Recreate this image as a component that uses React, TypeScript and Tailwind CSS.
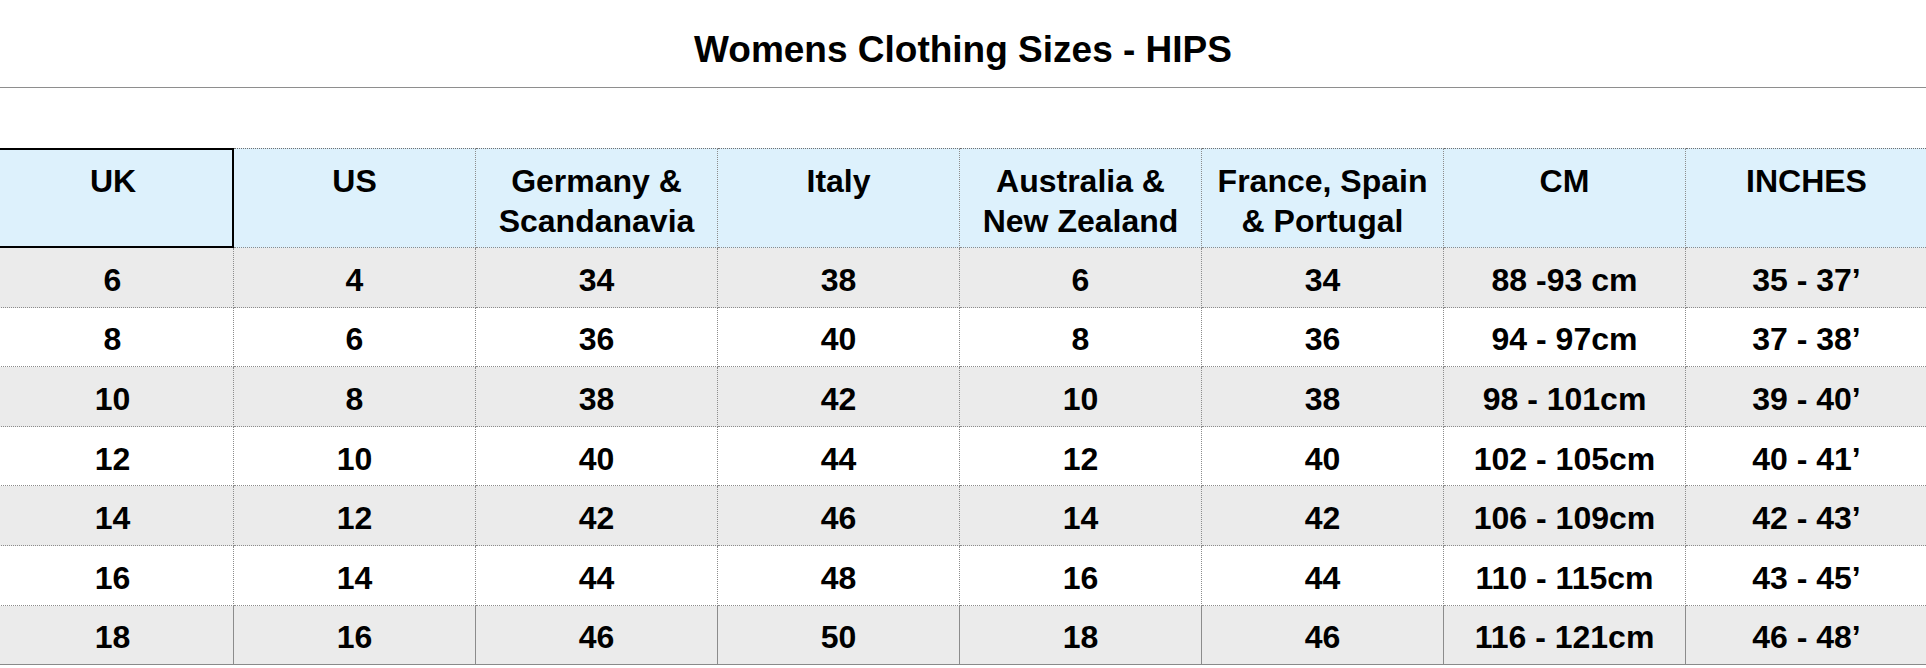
const headers: React.ReactNode[] = [
  "UK",
  "US",
  <>Germany &amp;<br />Scandanavia</>,
  "Italy",
  <>Australia &amp;<br />New Zealand</>,
  <>France, Spain<br />&amp; Portugal</>,
  "CM",
  "INCHES",
];

const rows: string[][] = [
  ["6", "4", "34", "38", "6", "34", "88 -93 cm", "35 - 37’"],
  ["8", "6", "36", "40", "8", "36", "94 - 97cm", "37 - 38’"],
  ["10", "8", "38", "42", "10", "38", "98 - 101cm", "39 - 40’"],
  ["12", "10", "40", "44", "12", "40", "102 - 105cm", "40 - 41’"],
  ["14", "12", "42", "46", "14", "42", "106 - 109cm", "42 - 43’"],
  ["16", "14", "44", "48", "16", "44", "110 - 115cm", "43 - 45’"],
  ["18", "16", "46", "50", "18", "46", "116 - 121cm", "46 - 48’"],
];

export default function App() {
  return (
    <div className="w-[1926px] h-[668px] overflow-hidden bg-white text-black font-['Liberation_Sans',Arial,sans-serif] font-bold">
      <div className="h-[88px] flex items-center justify-center border-b border-[#8e8e8e] text-[37px] pt-[12px]">
        Womens Clothing Sizes - HIPS
      </div>
      <div className="h-[60px]" />
      <div className="ml-[-8px] w-[1936px]">
        <div className="grid grid-cols-[repeat(8,242px)] h-[100px] bg-[#ddf1fc] text-[32px] leading-[40px]">
          {headers.map((h, i) =>
            i === 0 ? (
              <div key={i} className="border-2 border-black text-center pt-[11px]">
                {h}
              </div>
            ) : (
              <div
                key={i}
                className="border-t border-t-[#707070] border-b border-dotted border-b-[#8c8c8c] border-r border-r-[#8c8c8c] text-center pt-[12px]"
              >
                {h}
              </div>
            )
          )}
        </div>
        {rows.map((r, ri) => (
          <div
            key={ri}
            className={`grid grid-cols-[repeat(8,242px)] h-[59.6px] text-[32px] ${
              ri % 2 === 0 ? "bg-[#ebebeb]" : "bg-white"
            }`}
          >
            {r.map((c, ci) => (
              <div
                key={ci}
                className={`flex items-center justify-center border-r border-dotted border-r-[#8c8c8c] pt-[5px] ${
                  ri === rows.length - 1
                    ? "border-b border-b-[#8a8a8a] border-solid"
                    : "border-b border-b-[#8c8c8c]"
                }`}
              >
                {c}
              </div>
            ))}
          </div>
        ))}
      </div>
    </div>
  );
}
